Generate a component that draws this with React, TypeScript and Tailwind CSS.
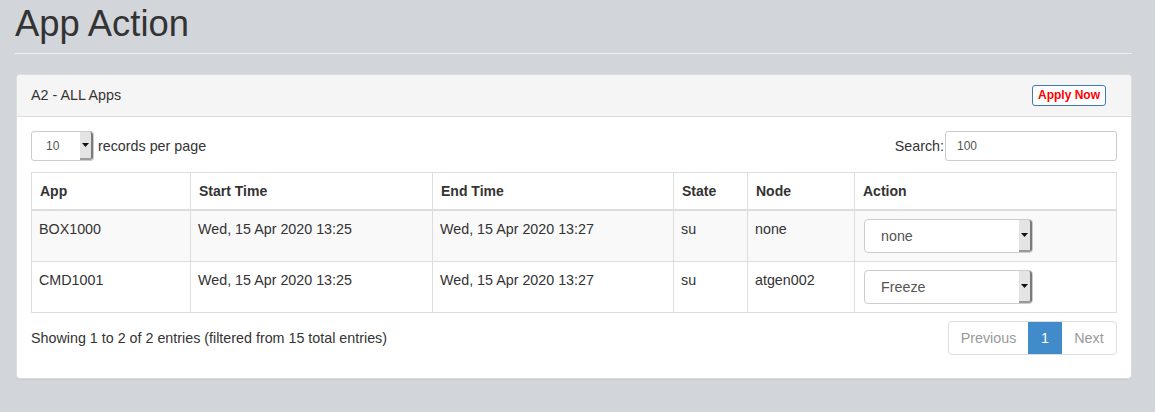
import React from "react";

function Arrow({ h }: { h: string }) {
  return (
    <div className={`flex ${h} w-[13px] items-center justify-center border-r-2 border-b-2 border-r-[#7a7a7a] border-b-[#9a9a9a] bg-[#e4e4e4] rounded-r-[3px]`}>
      <svg width="7" height="4" viewBox="0 0 7 4"><polygon points="0,0 7,0 3.5,4" fill="#111" /></svg>
    </div>
  );
}

const rows = [
  { app: "BOX1000", start: "Wed, 15 Apr 2020 13:25", end: "Wed, 15 Apr 2020 13:27", state: "su", node: "none", action: "none" },
  { app: "CMD1001", start: "Wed, 15 Apr 2020 13:25", end: "Wed, 15 Apr 2020 13:27", state: "su", node: "atgen002", action: "Freeze" },
];

export default function App() {
  return (
    <div className="min-h-[412px] bg-[#d2d5da] px-[15px] pt-[4px] pb-[34px] text-[14.3px] leading-[20px] text-[#333]" style={{ fontFamily: '"Liberation Sans", Arial, sans-serif' }}>
      <div className="mr-[8px] border-b border-[#eeeeee] pb-[9px]">
        <h1 className="text-[36.4px] leading-[39.6px] font-normal text-[#333]">App Action</h1>
      </div>
      <div className="mt-[20px] ml-px mr-[8px] rounded-[4px] border border-[#dddddd] bg-white shadow-[0_1px_1px_rgba(0,0,0,0.05)]">
        <div className="flex items-center justify-between rounded-t-[4px] border-b border-[#dddddd] bg-[#f5f5f5] py-[10px] pl-[14px] pr-[25px]">
          <span>A2 - ALL Apps</span>
          <button className="h-[21px] rounded-[3px] border border-[#3c7ab8] bg-white px-[5px] text-[12px] leading-[17px] font-bold text-[#ff0000]">Apply Now</button>
        </div>
        <div className="px-[14px] pt-[14px] pb-[23px]">
          <div className="flex items-center justify-between">
            <div className="flex items-center">
              <div className="flex h-[30px] w-[63px] items-center justify-between rounded-[3px] border border-[#cccccc] bg-white pl-[14px]">
                <span className="text-[12px] text-[#555]">10</span>
                <Arrow h="h-[28px]" />
              </div>
              <span className="ml-[4px]">records per page</span>
            </div>
            <div className="flex items-center">
              <span>Search:</span>
              <div className="ml-px flex h-[30px] w-[172px] items-center rounded-[3px] border border-[#cccccc] bg-white pl-[11px] text-[12px] text-[#555]">100</div>
            </div>
          </div>
          <table className="mt-[11px] w-full table-fixed border-collapse border border-[#dddddd]">
            <colgroup>
              <col className="w-[159px]" />
              <col className="w-[242px]" />
              <col className="w-[241px]" />
              <col className="w-[74px]" />
              <col className="w-[107px]" />
              <col />
            </colgroup>
            <thead>
              <tr>
                {["App", "Start Time", "End Time", "State", "Node", "Action"].map((h) => (
                  <th key={h} className="border border-b-2 border-[#dddddd] px-[8px] py-[8px] text-left text-[14px] font-bold">{h}</th>
                ))}
              </tr>
            </thead>
            <tbody>
              {rows.map((r, i) => (
                <tr key={r.app} className={i === 0 ? "bg-[#f9f9f9]" : "bg-white"}>
                  <td className="border border-[#dddddd] pl-[7px] pr-[8px] pt-[8px] pb-[22px] align-top">{r.app}</td>
                  <td className="border border-[#dddddd] pl-[7px] pr-[8px] pt-[8px] pb-[22px] align-top">{r.start}</td>
                  <td className="border border-[#dddddd] pl-[7px] pr-[8px] pt-[8px] pb-[22px] align-top">{r.end}</td>
                  <td className="border border-[#dddddd] pl-[7px] pr-[8px] pt-[8px] pb-[22px] align-top">{r.state}</td>
                  <td className="border border-[#dddddd] pl-[7px] pr-[8px] pt-[8px] pb-[22px] align-top">{r.node}</td>
                  <td className="border border-[#dddddd] pl-[9px] pr-[8px] pt-[8px] pb-[7px] align-top">
                    <div className="flex h-[34px] w-[169px] items-center justify-between rounded-[4px] border border-[#cccccc] bg-white pl-[16px]">
                      <span className="text-[#555]">{r.action}</span>
                      <Arrow h="h-[32px]" />
                    </div>
                  </td>
                </tr>
              ))}
            </tbody>
          </table>
          <div className="mt-[8px] flex items-center justify-between">
            <span>Showing 1 to 2 of 2 entries (filtered from 15 total entries)</span>
            <div className="flex h-[34px] overflow-hidden rounded-[4px] border border-[#dddddd]">
              <span className="flex w-[79px] items-center justify-center text-[#999]">Previous</span>
              <span className="flex w-[34px] items-center justify-center bg-[#428bca] text-white">1</span>
              <span className="flex w-[54px] items-center justify-center text-[#999]">Next</span>
            </div>
          </div>
        </div>
      </div>
    </div>
  );
}
